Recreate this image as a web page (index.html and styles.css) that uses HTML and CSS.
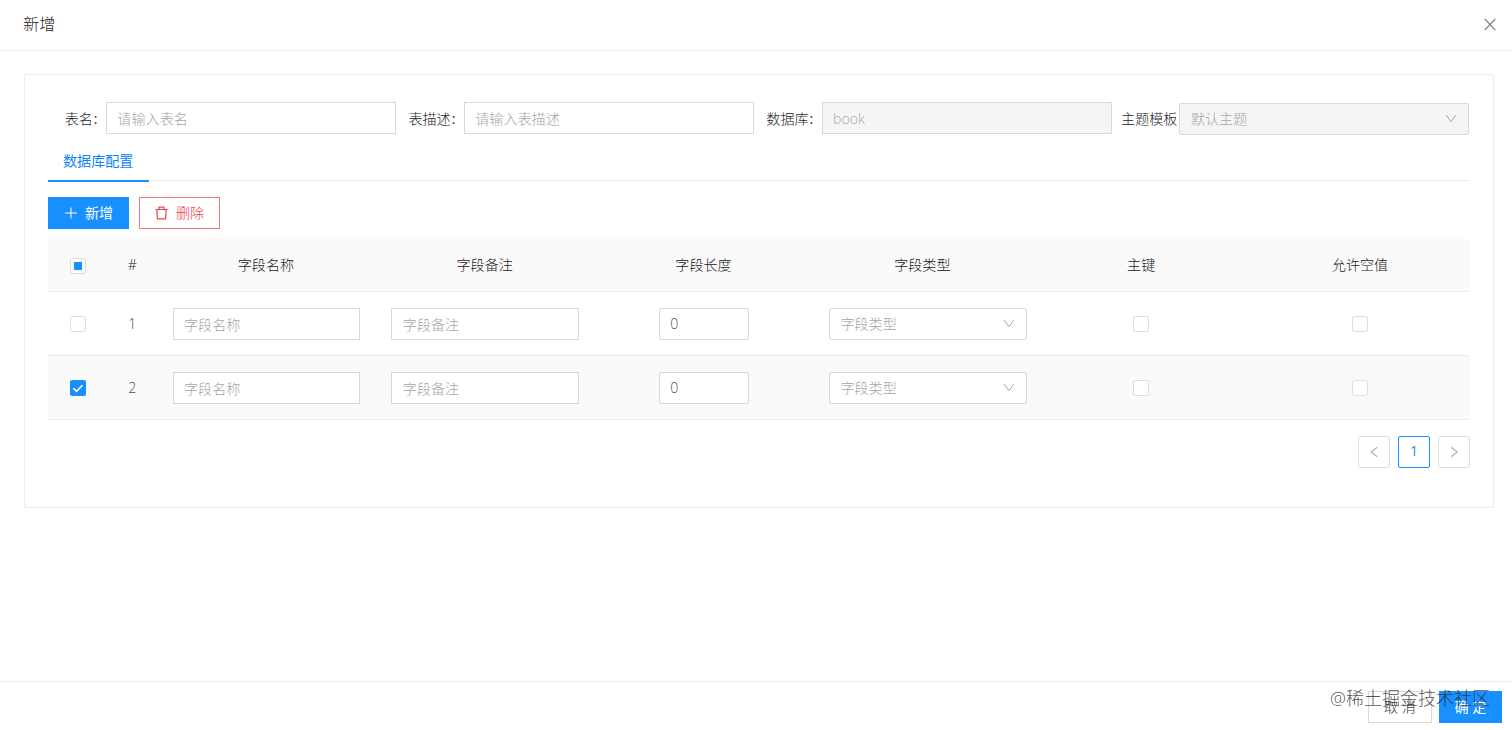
FILE: index.html
```html
<!DOCTYPE html>
<html lang="zh-CN">
<head>
<meta charset="utf-8">
<title>新增</title>
<link rel="stylesheet" href="styles.css">
</head>
<body>
<svg class="defs" aria-hidden="true">
  <symbol id="down" viewBox="0 0 12 12"><path d="M1.2 2 L6 8.8 L10.8 2" fill="none" stroke="currentColor"/></symbol>
</svg>
<div class="drawer">
  <header class="drawer-header">
    <h1 class="drawer-title">新增</h1>
    <svg class="close" viewBox="0 0 12 12"><path d="M.7 .4 L11.3 11.6 M11.3 .4 L.7 11.6" fill="none" stroke="currentColor" stroke-width="1.3"/></svg>
  </header>

  <main class="drawer-body">
    <section class="card">
      <div class="form">
        <div class="field"><span class="label">表名<i class="colon">:</i></span><div class="input placeholder">请输入表名</div></div>
        <div class="field"><span class="label">表描述<i class="colon">:</i></span><div class="input placeholder">请输入表描述</div></div>
        <div class="field"><span class="label">数据库<i class="colon">:</i></span><div class="input disabled">book</div></div>
        <div class="field field-select"><span class="label label-tight">主题模板</span><div class="input select disabled"><span>默认主题</span><svg class="arrow"><use href="#down"/></svg></div></div>
      </div>

      <nav class="tabs"><div class="tab">数据库配置</div></nav>

      <div class="toolbar">
        <button class="btn primary"><svg class="btn-icon" viewBox="0 0 14 14"><path d="M7 1.5 V12.5 M1.2 7 H12.8" fill="none" stroke="currentColor"/></svg>新增</button>
        <button class="btn danger"><svg class="btn-icon" viewBox="0 0 14 14"><path d="M.5 3.5 H12.5 M4 3.5 V1.2 H9 V3.5 M1.8 3.5 L2.4 12.8 H10.6 L11.2 3.5" fill="none" stroke="currentColor" stroke-width="1.2"/></svg>删除</button>
      </div>

      <div class="table">
        <div class="row head">
          <div class="cell"><span class="checkbox partial"></span></div>
          <div class="cell">#</div><div class="cell">字段名称</div><div class="cell">字段备注</div><div class="cell">字段长度</div><div class="cell">字段类型</div><div class="cell">主键</div><div class="cell">允许空值</div>
        </div>
        <div class="row">
          <div class="cell"><span class="checkbox"></span></div>
          <div class="cell index">1</div>
          <div class="cell pad"><div class="input placeholder">字段名称</div></div>
          <div class="cell pad"><div class="input placeholder">字段备注</div></div>
          <div class="cell"><div class="input number">0</div></div>
          <div class="cell left"><div class="input select placeholder"><span>字段类型</span><svg class="arrow"><use href="#down"/></svg></div></div>
          <div class="cell"><span class="checkbox"></span></div>
          <div class="cell"><span class="checkbox"></span></div>
        </div>
        <div class="row selected">
          <div class="cell"><span class="checkbox checked"><svg viewBox="0 0 16 16"><path d="M3.4 8.2 L6.6 11.3 L12.4 5.3" fill="none" stroke="#fff" stroke-width="1.6"/></svg></span></div>
          <div class="cell index">2</div>
          <div class="cell pad"><div class="input placeholder">字段名称</div></div>
          <div class="cell pad"><div class="input placeholder">字段备注</div></div>
          <div class="cell"><div class="input number">0</div></div>
          <div class="cell left"><div class="input select placeholder"><span>字段类型</span><svg class="arrow"><use href="#down"/></svg></div></div>
          <div class="cell"><span class="checkbox"></span></div>
          <div class="cell"><span class="checkbox"></span></div>
        </div>
      </div>

      <div class="pagination">
        <span class="page"><svg class="page-icon" viewBox="0 0 12 12"><path d="M9.2 1.3 L3.2 6 L9.2 10.7" fill="none" stroke="currentColor" stroke-width="1.1"/></svg></span>
        <span class="page current">1</span>
        <span class="page"><svg class="page-icon" viewBox="0 0 12 12"><path d="M3.2 1.3 L9.2 6 L3.2 10.7" fill="none" stroke="currentColor" stroke-width="1.1"/></svg></span>
      </div>
    </section>
  </main>

  <footer class="drawer-footer">
    <button class="btn cancel">取 消</button>
    <button class="btn primary ok">确 定</button>
    <span class="watermark">@稀土掘金技术社区</span>
  </footer>
</div>
</body>
</html>
```
FILE: styles.css
```css
* { box-sizing: border-box; }
body {
  margin: 0;
  background: #fff;
  color: #595959;
  font: 300 14.1px/22px "Open Sans", "Noto Sans CJK SC", sans-serif;
}
.defs { display: none; }
.drawer { display: flex; flex-direction: column; width: 1512px; height: 730px; overflow: hidden; }
.drawer-header {
  display: flex; justify-content: space-between; align-items: center;
  height: 51px; padding: 0 16px 2px 23px; border-bottom: 1px solid #ececec;
}
.drawer-title { margin: 0; font-size: 16.2px; line-height: 22px; font-weight: 300; color: #262626; }
.close { width: 12px; height: 13px; color: #7d7d7d; }
.drawer-body { flex: 1; padding: 23px 18px 0 24px; }
.card { height: 434px; padding: 27px 23px 0 23px; border: 1px solid #ececec; border-radius: 2px; }

.form { display: flex; margin: 0 .6px 0 -10px; }
.field { flex: 1; display: flex; align-items: center; justify-content: flex-end; height: 32px; }
.field-select { height: 33px; padding-top: 1px; }
.label { display: flex; padding-top: 2px; color: #262626; white-space: nowrap; }
.label-tight { margin-right: 2px; padding-top: 0; }
.colon { width: 13px; padding-left: 1px; font-style: normal; font-weight: 400; }
.input {
  width: 290px; height: 32px; padding: 1px 11px 0 10.5px; border: 1px solid #d9d9d9;
  background: #fff; line-height: 30px; white-space: nowrap;
}
.placeholder { color: #a6a6a6; }
.disabled { background: #f5f5f5; color: #a8a8a8; }
.select { display: flex; align-items: center; justify-content: space-between; padding: 0 11px 0 10.5px; border-radius: 2px; }
.arrow { width: 12px; height: 12px; color: #a6a6a6; }

.tabs { height: 46px; margin-right: 1px; border-bottom: 1px solid #ededed; }
.tab { width: 101px; height: 47px; padding: 15px 15px 0; border-bottom: 2px solid #1890ff; color: #0b84f5; font-weight: 400; }

.toolbar { display: flex; gap: 10px; margin-top: 16px; }
.btn {
  display: flex; align-items: center; justify-content: center; width: 81px; height: 32px;
  padding: 0; border: 1px solid #d9d9d9; background: #fff; font: inherit; color: #404040;
}
.btn-icon { width: 14px; height: 14px; margin-right: 7px; }
.primary { background: #1890ff; border-color: #1890ff; color: #fff; font-weight: 400; }
.danger { border-color: #f2777a; color: #f04347; }

.table { margin: 10px .6px 0 0; }
.row {
  display: grid; grid-template-columns: 60px 48.5px repeat(6, 1fr);
  height: 64px; border-bottom: 1px solid #ececec;
}
.head { height: 53px; background: #fafafa; color: #202020; }
.selected { background: #fafafa; }
.cell { display: flex; align-items: center; justify-content: center; min-width: 0; }
.index { color: #4a4a4a; }
.pad { padding: 0 15.3px 0 16px; }
.left { justify-content: flex-start; padding-left: 16px; }
.row .input { width: 100%; }
.row .number { width: 90px; margin-left: .5px; padding-top: 0; border-radius: 2px; color: #4a4a4a; }
.row .select { width: 198px; flex: none; }
.checkbox {
  display: grid; place-items: center; width: 16px; height: 16px; margin-top: 1px;
  border: 1px solid #dedede; border-radius: 2px; background: #fff;
}
.partial::before { content: ""; width: 8px; height: 8px; background: #1890ff; }
.checked { border: 0; background: #1890ff; }

.pagination { display: flex; justify-content: flex-end; gap: 8px; margin-top: 16px; }
.page {
  display: grid; place-items: center; width: 32px; height: 32px; padding-bottom: 1px;
  border: 1px solid #dedede; border-radius: 2px; color: #adadad;
}
.page-icon { width: 12px; height: 12px; margin-top: 1px; }
.current { padding-bottom: 2px; border-color: #1890ff; color: #1890ff; font-weight: 400; }

.drawer-footer {
  position: relative; display: flex; justify-content: flex-end; gap: 7px;
  height: 49px; padding: 9px 10px 0 0; border-top: 1px solid #ececec;
}
.cancel { width: 64px; }
.ok { width: 63px; }
.watermark {
  position: absolute; right: 22px; top: 3px; font-size: 18px; line-height: 26px;
  color: rgba(40, 40, 40, .8); white-space: nowrap;
}
```
